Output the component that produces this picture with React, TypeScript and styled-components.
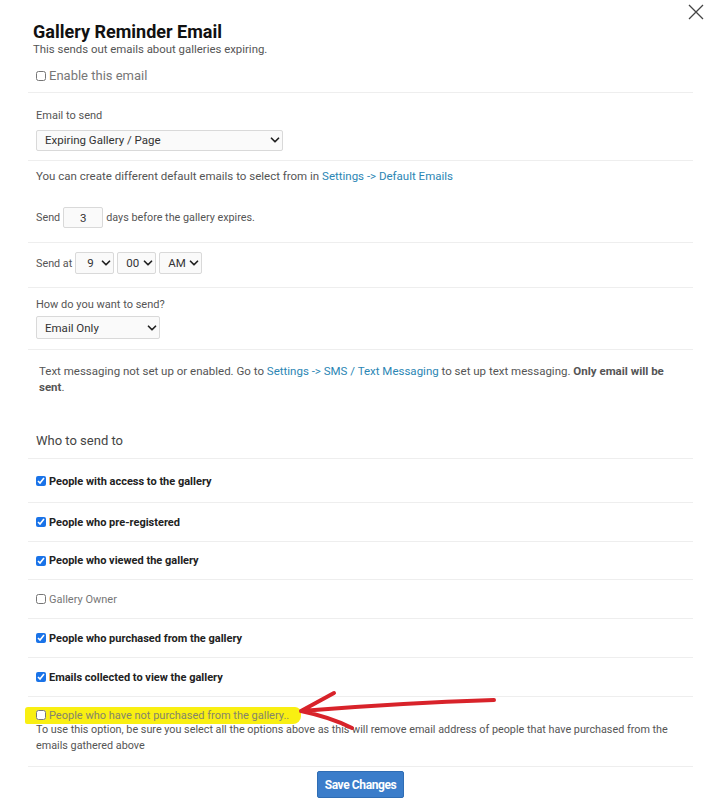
import React from 'react';
import styled, { createGlobalStyle } from 'styled-components';
import { ChevronDown } from 'lucide-react';

const GlobalStyle = createGlobalStyle`
  html, body {
    margin: 0;
    padding: 0;
    background: #ffffff;
  }
  body {
    font-family: Roboto, "Liberation Sans", Arial, sans-serif;
    color: #555;
  }
`;

const Page = styled.div`
  position: relative;
  width: 720px;
  height: 800px;
  overflow: hidden;
  background: #fff;
`;

const CloseButton = styled.button`
  position: absolute;
  top: 3px;
  right: 15px;
  width: 18px;
  height: 18px;
  padding: 0;
  border: 0;
  background: none;
  cursor: pointer;
`;

const Column = styled.div`
  margin-left: 28px;
  width: 665px;
`;

const Header = styled.div`
  padding: 22px 0 0 5px;
`;

const Title = styled.h2`
  margin: 0;
  font-size: 18px;
  line-height: 20px;
  font-weight: 700;
  color: #111;
`;

const Subtitle = styled.p`
  margin: 0;
  font-size: 11.4px;
  line-height: 14px;
  color: #555;
`;

const EnableRow = styled.label`
  display: flex;
  align-items: center;
  gap: 3px;
  height: 36px;
  box-sizing: border-box;
  padding: 3px 0 0 8px;
  font-size: 13px;
  color: #777;
`;

const Section = styled.div<{ $pt: number; $pb: number }>`
  border-top: 1px solid #eeeeee;
  padding: ${(p) => p.$pt}px 0 ${(p) => p.$pb}px 8px;
`;

const Box = styled.input.attrs({ type: 'checkbox' })`
  width: 10px;
  height: 10px;
  margin: 0;
  accent-color: #1a73e8;
  flex: none;
`;

const FieldLabel = styled.div`
  font-size: 11px;
  line-height: 14px;
  color: #555;
`;

const Text = styled.p<{ $indent?: number }>`
  margin: 0;
  font-size: 11.5px;
  line-height: 16px;
  color: #555;
  padding-left: ${(p) => p.$indent || 0}px;
  max-width: 640px;
`;

const Link = styled.a`
  color: #2b86b4;
  text-decoration: none;
`;

const InlineRow = styled.div<{ $mt?: number }>`
  display: flex;
  align-items: center;
  gap: 3px;
  margin-top: ${(p) => p.$mt || 0}px;
  font-size: 10.8px;
  color: #555;
`;

const SelectWrap = styled.div<{ $w: number; $h: number; $mt?: number }>`
  position: relative;
  width: ${(p) => p.$w}px;
  height: ${(p) => p.$h}px;
  margin-top: ${(p) => p.$mt || 0}px;

  svg {
    position: absolute;
    right: 1px;
    top: 50%;
    transform: translateY(-50%);
    pointer-events: none;
    color: #222;
  }
`;

const Select = styled.select<{ $pl?: number }>`
  appearance: none;
  width: 100%;
  height: 100%;
  box-sizing: border-box;
  border: 1px solid #d9d9d9;
  border-radius: 2px;
  background: #fafafa;
  padding: 0 0 0 ${(p) => p.$pl || 8}px;
  font-family: Roboto, "Liberation Sans", Arial, sans-serif;
  font-size: 11.5px;
  color: #333;
`;

const DaysInput = styled.input`
  width: 40px;
  height: 21px;
  box-sizing: border-box;
  border: 1px solid #d9d9d9;
  border-radius: 2px;
  background: #fafafa;
  text-align: center;
  font-family: Roboto, "Liberation Sans", Arial, sans-serif;
  font-size: 11.5px;
  color: #333;
  padding: 0;
`;

const Heading = styled.div`
  margin-top: 37px;
  font-size: 13px;
  line-height: 18px;
  color: #444;
`;

const Row = styled.label<{ $h: number; $pt?: number }>`
  display: flex;
  align-items: center;
  gap: 3px;
  height: ${(p) => p.$h}px;
  box-sizing: border-box;
  padding: ${(p) => p.$pt || 0}px 0 0 8px;
  border-top: 1px solid #eeeeee;
`;

const RowLabel = styled.span<{ $bold: boolean }>`
  font-size: 11px;
  font-weight: ${(p) => (p.$bold ? 700 : 400)};
  color: ${(p) => (p.$bold ? '#222' : '#777')};
`;

const LastRow = styled.div`
  border-top: 1px solid #eeeeee;
  border-bottom: 1px solid #eeeeee;
  padding: 8px 0 12px 8px;
`;

const Highlight = styled.label`
  display: inline-flex;
  align-items: center;
  gap: 3px;
  margin-left: -11px;
  padding: 2px 12px 2px 11px;
  background: #f9ef12;
  border-radius: 3px 6px 8px 2px;
  font-size: 11px;
  color: #85856a;
`;

const Note = styled.p`
  margin: -2px 0 0;
  font-size: 10.8px;
  line-height: 16px;
  color: #555;
`;

const Footer = styled.div`
  display: flex;
  justify-content: center;
  padding-top: 4px;
`;

const SaveButton = styled.button`
  height: 27px;
  padding: 0 7px;
  border: 1px solid #2f6db4;
  border-radius: 2px;
  background: #3b7dca;
  color: #fff;
  font-family: Roboto, "Liberation Sans", Arial, sans-serif;
  font-size: 12px;
  font-weight: 700;
  letter-spacing: -0.4px;
  cursor: pointer;
`;

const Arrow = styled.svg`
  position: absolute;
  left: 290px;
  top: 684px;
  pointer-events: none;
`;

const recipients = [
  { label: 'People with access to the gallery', on: true, h: 44 },
  { label: 'People who pre-registered', on: true, h: 39 },
  { label: 'People who viewed the gallery', on: true, h: 38 },
  { label: 'Gallery Owner', on: false, h: 39 },
  { label: 'People who purchased from the gallery', on: true, h: 39 },
  { label: 'Emails collected to view the gallery', on: true, h: 39 },
];

const Chevron = () => <ChevronDown size={14} strokeWidth={3} />;

export default function App() {
  return (
    <Page>
      <GlobalStyle />
      <CloseButton aria-label="Close">
        <svg width="18" height="18" viewBox="0 0 18 18">
          <path d="M2 2 L16 16 M16 2 L2 16" stroke="#444" strokeWidth="1.3" fill="none" />
        </svg>
      </CloseButton>

      <Column>
        <Header>
          <Title>Gallery Reminder Email</Title>
          <Subtitle>This sends out emails about galleries expiring.</Subtitle>
        </Header>

        <EnableRow>
          <Box />
          Enable this email
        </EnableRow>

        <Section $pt={16} $pb={10}>
          <FieldLabel>Email to send</FieldLabel>
          <SelectWrap $w={247} $h={21} $mt={6}>
            <Select defaultValue="expiring">
              <option value="expiring">Expiring Gallery / Page</option>
            </Select>
            <Chevron />
          </SelectWrap>
        </Section>

        <Section $pt={7} $pb={14}>
          <Text>
            You can create different default emails to select from in{' '}
            <Link href="#">Settings -&gt; Default Emails</Link>
          </Text>
          <InlineRow $mt={23}>
            Send <DaysInput defaultValue="3" /> days before the gallery expires.
          </InlineRow>
        </Section>

        <Section $pt={9} $pb={13}>
          <InlineRow>
            Send at
            <SelectWrap $w={39} $h={22}>
              <Select defaultValue="9" $pl={11}>
                <option value="9">9</option>
              </Select>
              <Chevron />
            </SelectWrap>
            <SelectWrap $w={39} $h={22}>
              <Select defaultValue="00">
                <option value="00">00</option>
              </Select>
              <Chevron />
            </SelectWrap>
            <SelectWrap $w={43} $h={22}>
              <Select defaultValue="AM">
                <option value="AM">AM</option>
              </Select>
              <Chevron />
            </SelectWrap>
          </InlineRow>
        </Section>

        <Section $pt={10} $pb={10}>
          <FieldLabel>How do you want to send?</FieldLabel>
          <SelectWrap $w={124} $h={23} $mt={4}>
            <Select defaultValue="email">
              <option value="email">Email Only</option>
            </Select>
            <Chevron />
          </SelectWrap>
        </Section>

        <Section $pt={13} $pb={8}>
          <Text $indent={3}>
            Text messaging not set up or enabled. Go to{' '}
            <Link href="#">Settings -&gt; SMS / Text Messaging</Link> to set up text messaging.{' '}
            <b>Only email will be sent</b>.
          </Text>
          <Heading>Who to send to</Heading>
        </Section>

        {recipients.map((r, i) => (
          <Row key={r.label} $h={r.h} $pt={i === 0 ? 1 : 0}>
            <Box defaultChecked={r.on} />
            <RowLabel $bold={r.on}>{r.label}</RowLabel>
          </Row>
        ))}

        <LastRow>
          <Highlight>
            <Box />
            People who have not purchased from the gallery..
          </Highlight>
          <Note>
            To use this option, be sure you select all the options above as this will remove email
            address of people that have purchased from the emails gathered above
          </Note>
        </LastRow>

        <Footer>
          <SaveButton>Save Changes</SaveButton>
        </Footer>
      </Column>

      <Arrow width="220" height="50" viewBox="0 0 220 50">
        <path
          d="M204 16 Q110 19 11 27 M11 27 L44 9 M11 27 Q40 33 62 44"
          stroke="#d8232a"
          strokeWidth="4"
          strokeLinecap="round"
          strokeLinejoin="round"
          fill="none"
        />
      </Arrow>
    </Page>
  );
}
